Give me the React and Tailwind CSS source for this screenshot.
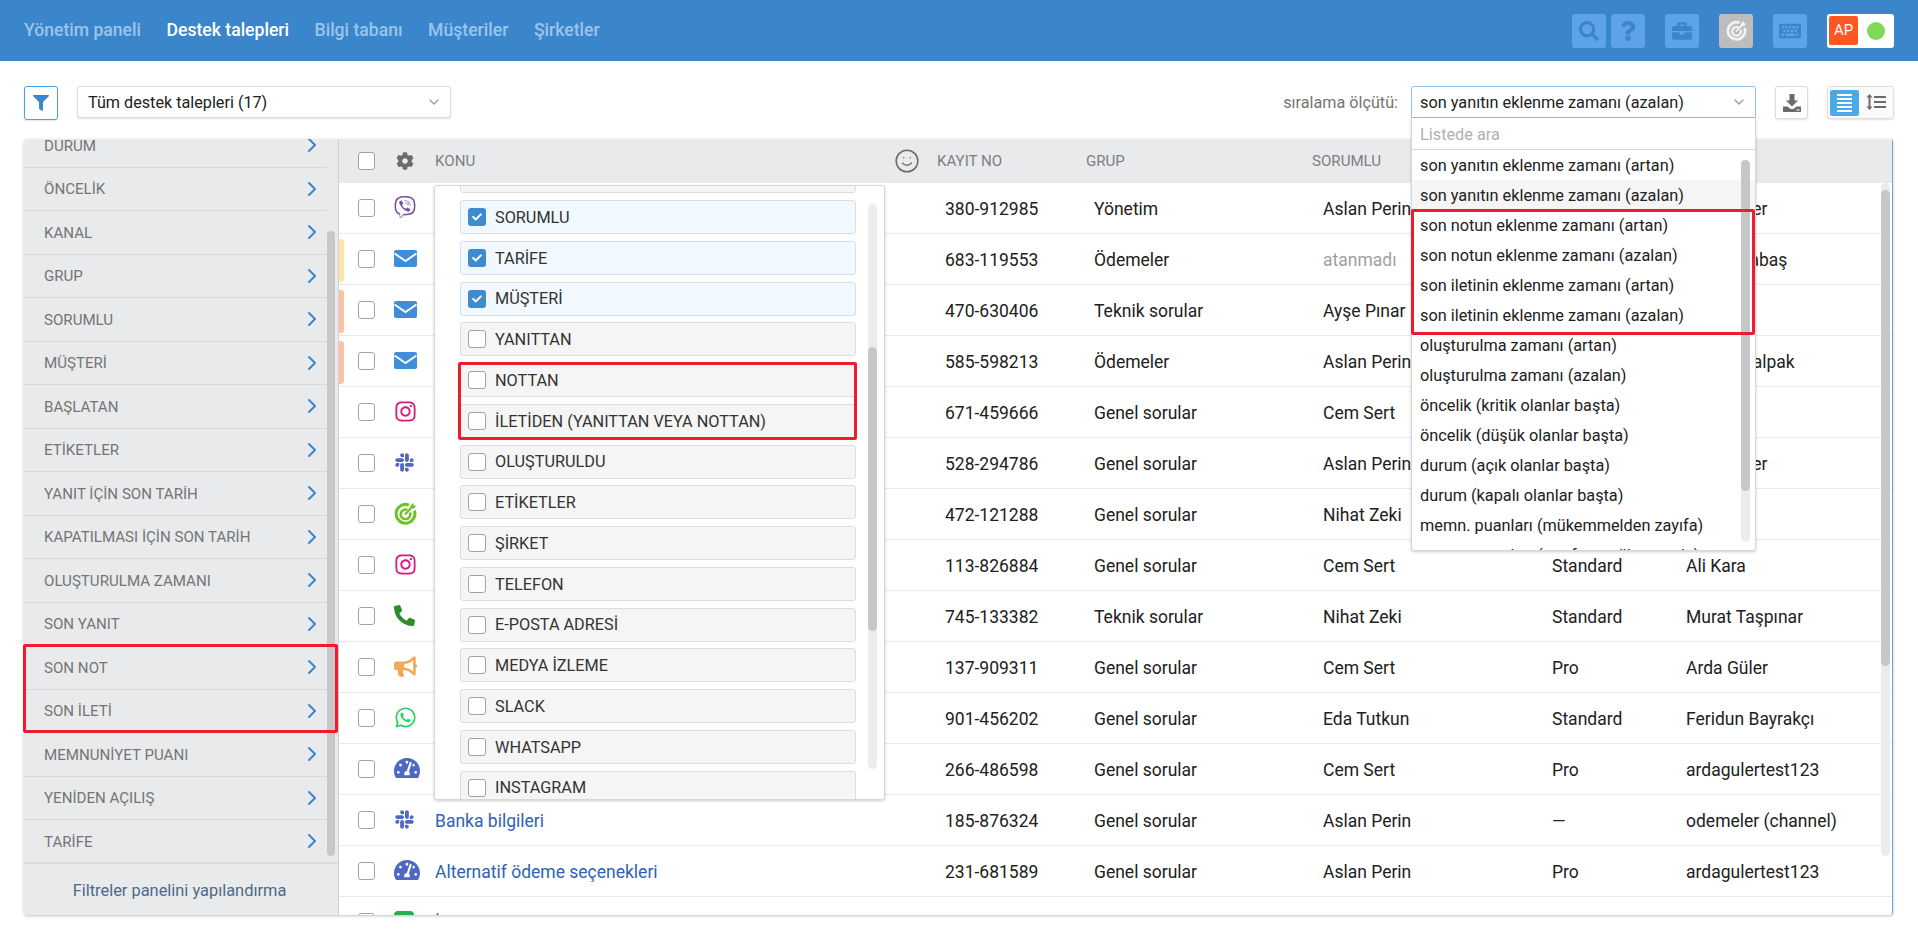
import React from "react";
import { FaViber, FaInstagram, FaSlack, FaWhatsapp, FaTachometerAlt, FaPhoneAlt, FaBullhorn, FaSearch, FaQuestion, FaBriefcase, FaKeyboard, FaCog, FaFilter, FaCheck } from "react-icons/fa";
import { ChevronRight, ChevronDown, Smile } from "lucide-react";

const filters = ["DURUM","ÖNCELİK","KANAL","GRUP","SORUMLU","MÜŞTERİ","BAŞLATAN","ETİKETLER","YANIT İÇİN SON TARİH","KAPATILMASI İÇİN SON TARİH","OLUŞTURULMA ZAMANI","SON YANIT","SON NOT","SON İLETİ","MEMNUNİYET PUANI","YENİDEN AÇILIŞ","TARİFE"];

const Mail = () => (
  <svg width="23" height="17" viewBox="0 0 23 17"><rect width="23" height="17" rx="2" fill="#3e8fd8"/><path d="M0.5 3.5 L11.5 11 L22.5 3.5" fill="none" stroke="#fff" strokeWidth="2"/></svg>
);
const Target = ({ c = "#6cc524", s = 23 }) => (
  <svg width={s} height={s} viewBox="0 0 24 24" fill="none">
    <path d="M15.5 3.2 A9.8 9.8 0 1 0 21.2 9" stroke={c} strokeWidth="3.2"/>
    <path d="M14 8.3 A5 5 0 1 0 16.6 11" stroke={c} strokeWidth="2.6"/>
    <path d="M11.5 13 L19 5" stroke={c} strokeWidth="2.2"/>
    <path d="M17 4 L20 1 L20.6 3.6 L23.4 4 L20.4 7 L17.4 6.6 Z" fill={c}/>
  </svg>
);
const icons = {
  viber: <FaViber size={22} color="#7b519d" />,
  mail: <Mail />,
  insta: <FaInstagram size={23} color="#d61a82" />,
  slack: <FaSlack size={21} color="#4f68c4" />,
  target: <Target />,
  phone: <FaPhoneAlt size={21} color="#2e8b2e" />,
  mega: <FaBullhorn size={23} color="#f0a85a" />,
  wa: <FaWhatsapp size={23} color="#25d366" />,
  gauge: <FaTachometerAlt size={26} color="#4f68c4" />,
  sms: <div className="w-[20px] h-[20px] rounded-[4px] bg-[#22b14c]" />,
};

const rows = [
  ["viber","Banka havalesi","380-912985","Yönetim","Aslan Perin","Pro","Cem Güler",""],
  ["mail","Fatura sorunu","683-119553","Ödemeler","atanmadı","Pro","Ayla Karabaş","y"],
  ["mail","Şifre sıfırlama","470-630406","Teknik sorular","Ayşe Pınar","Pro","—","p"],
  ["mail","Ödeme hatası","585-598213","Ödemeler","Aslan Perin","Pro","Ahmet Kalpak","p"],
  ["insta","Kargo durumu","671-459666","Genel sorular","Cem Sert","Pro","—",""],
  ["slack","Hesap bilgileri","528-294786","Genel sorular","Aslan Perin","Pro","Cem Güler",""],
  ["target","Ürün iadesi","472-121288","Genel sorular","Nihat Zeki","Pro","Eren Koç",""],
  ["insta","Sipariş takibi","113-826884","Genel sorular","Cem Sert","Standard","Ali Kara",""],
  ["phone","Geri arama","745-133382","Teknik sorular","Nihat Zeki","Standard","Murat Taşpınar",""],
  ["mega","Reklam yorumu","137-909311","Genel sorular","Cem Sert","Pro","Arda Güler",""],
  ["wa","Tarife seçimi","901-456202","Genel sorular","Eda Tutkun","Standard","Feridun Bayrakçı",""],
  ["gauge","Üyelik bilgisi","266-486598","Genel sorular","Cem Sert","Pro","ardagulertest123",""],
  ["slack","Banka bilgileri","185-876324","Genel sorular","Aslan Perin","—","odemeler (channel)",""],
  ["gauge","Alternatif ödeme seçenekleri","231-681589","Genel sorular","Aslan Perin","Pro","ardagulertest123",""],
  ["sms","İade talebi","402-118830","Genel sorular","Cem Sert","Pro","Ali Kara",""],
];

const columns = [
  ["SORUMLU",true],["TARİFE",true],["MÜŞTERİ",true],["YANITTAN",false],["NOTTAN",false],["İLETİDEN (YANITTAN VEYA NOTTAN)",false],["OLUŞTURULDU",false],["ETİKETLER",false],["ŞİRKET",false],["TELEFON",false],["E-POSTA ADRESİ",false],["MEDYA İZLEME",false],["SLACK",false],["WHATSAPP",false],["INSTAGRAM",false],
];

const sorts = ["son yanıtın eklenme zamanı (artan)","son yanıtın eklenme zamanı (azalan)","son notun eklenme zamanı (artan)","son notun eklenme zamanı (azalan)","son iletinin eklenme zamanı (artan)","son iletinin eklenme zamanı (azalan)","oluşturulma zamanı (artan)","oluşturulma zamanı (azalan)","öncelik (kritik olanlar başta)","öncelik (düşük olanlar başta)","durum (açık olanlar başta)","durum (kapalı olanlar başta)","memn. puanları (mükemmelden zayıfa)","memn. puanları (zayıftan mükemmele)"];

const Check = ({ on, cls = "" }) => on ? (
  <span className={"shrink-0 flex items-center justify-center w-[18px] h-[18px] rounded-[3px] bg-[#3f8bcf] " + cls}><FaCheck size={10} color="#fff" /></span>
) : (
  <span className={"shrink-0 block w-[18px] h-[18px] rounded-[3px] bg-white border-[1.5px] border-[#a3a3a3] " + cls} />
);

const HBtn = ({ children, grey }) => (
  <div className={"w-[34px] h-[34px] rounded-[3px] flex items-center justify-center " + (grey ? "bg-[#bdbdbd]" : "bg-[#5da3e8]")}>{children}</div>
);

const NavItem = ({ children, on }) => (
  <span className={"text-[17.6px] font-medium " + (on ? "text-white" : "text-[#9ac4ec]")}>{children}</span>
);

export default function App() {
  return (
    <div className="relative w-[1918px] h-[941px] overflow-hidden bg-white font-[Roboto,sans-serif] text-[#212121]">
      {/* top bar */}
      <header className="h-[61px] bg-[#3b86cb] flex items-center pl-[24px] pr-[24px]">
        <nav className="flex gap-[25.5px]">
          <NavItem>Yönetim paneli</NavItem>
          <NavItem on>Destek talepleri</NavItem>
          <NavItem>Bilgi tabanı</NavItem>
          <NavItem>Müşteriler</NavItem>
          <NavItem>Şirketler</NavItem>
        </nav>
        <div className="ml-auto flex items-center">
          <div className="flex gap-[5px]">
            <HBtn><FaSearch size={20} color="#3b86cb" /></HBtn>
            <HBtn><FaQuestion size={20} color="#3b86cb" /></HBtn>
          </div>
          <div className="ml-[20px]"><HBtn><FaBriefcase size={20} color="#3b86cb" /></HBtn></div>
          <div className="ml-[20px]"><HBtn grey><Target c="#f2f2f2" s={21} /></HBtn></div>
          <div className="ml-[20px]"><HBtn><FaKeyboard size={22} color="#3b86cb" /></HBtn></div>
          <div className="ml-[20px] w-[67px] h-[34px] rounded-[3px] bg-white flex items-center pl-[2px]">
            <span className="w-[29px] h-[29px] rounded-[2px] bg-[#ff5722] text-white text-[15px] flex items-center justify-center">AP</span>
            <span className="ml-[9px] w-[18px] h-[18px] rounded-full bg-[#7ed957]" />
          </div>
        </div>
      </header>

      {/* toolbar */}
      <div className="h-[78px] flex items-start pt-[25px] pl-[24px] pr-[24px]">
        <button className="w-[34px] h-[34px] rounded-[3px] border border-[#4aa0e6] bg-white flex items-center justify-center shadow-[0_1px_2px_rgba(0,0,0,0.12)]">
          <FaFilter size={16} color="#3b86cb" />
        </button>
        <div className="ml-[19px] w-[374px] h-[32px] rounded-[3px] border border-[#dcdcdc] bg-white shadow-[0_1px_2px_rgba(0,0,0,0.12)] flex items-center pl-[10px] pr-[8px] text-[16.2px]">
          <span className="pt-[2px]">Tüm destek talepleri (17)</span>
          <ChevronDown size={16} color="#9e9e9e" className="ml-auto" />
        </div>
        <span className="ml-auto text-[16.2px] text-[#757575] h-[32px] pt-[2px] flex items-center">sıralama ölçütü:</span>
        <div className="ml-[13px] w-[345px] h-[32px] rounded-t-[3px] border border-[#90c2ec] bg-white flex items-center pl-[8px] pr-[8px] text-[16.3px]">
          <span className="pt-[2px]">son yanıtın eklenme zamanı (azalan)</span>
          <ChevronDown size={16} color="#9e9e9e" className="ml-auto" />
        </div>
        <button className="ml-[19px] w-[33px] h-[33px] rounded-[3px] border border-[#dcdcdc] bg-white shadow-[0_1px_2px_rgba(0,0,0,0.12)] flex items-center justify-center">
          <svg width="18" height="18" viewBox="0 0 18 18" fill="#6b6b6b"><path d="M6.5 0h5v6.5h3.5L9 12.5 3 6.5h3.5z"/><path d="M0 12.5h4.5L7.5 15h3l3-2.5H18V18H0z"/><rect x="13.5" y="15.5" width="3" height="1" fill="#fff"/></svg>
        </button>
        <div className="ml-[19px] w-[67px] h-[33px] rounded-[3px] border border-[#e0e0e0] bg-[#fafafa] shadow-[0_1px_2px_rgba(0,0,0,0.12)] flex items-center pl-[2px]">
          <span className="w-[29px] h-[26px] rounded-[2px] bg-[#4aa9e9] flex flex-col items-center justify-center gap-[2px]">
            <i className="block w-[15px] h-[2px] bg-white"/><i className="block w-[15px] h-[2px] bg-white"/><i className="block w-[15px] h-[2px] bg-white"/><i className="block w-[15px] h-[2px] bg-white"/><i className="block w-[15px] h-[2px] bg-white"/>
          </span>
          <svg className="ml-[7px] -mt-[1px]" width="20" height="16" viewBox="0 0 20 16" fill="#6b6b6b"><path d="M3.5 0l3 3.5H4.5v9h2l-3 3.5-3-3.5h2v-9h-2z"/><rect x="8" y="2" width="12" height="2"/><rect x="8" y="7" width="12" height="2"/><rect x="8" y="12" width="12" height="2"/></svg>
        </div>
      </div>

      {/* main panel */}
      <div className="ml-[24px] w-[1869px] h-[776px] flex rounded-[3px] overflow-hidden border-r border-r-[#6ba6dc] shadow-[0_1px_3px_rgba(0,0,0,0.25)]">
        {/* filters */}
        <aside className="relative w-[315px] shrink-0 bg-[#e9eaec] border-r border-[#d0d2d4] flex flex-col">
          <div className="flex-1 overflow-hidden">
            <div className="-mt-[15px] pr-[11px]">
              {filters.map((f) => (
                <div key={f} className="h-[43.5px] flex items-center pl-[20px] pr-[3px] border-b border-[#d7d8da] text-[15.1px] text-[#757575]">
                  <span className="pt-[2px]">{f}</span>
                  <ChevronRight size={24} color="#3b86cb" strokeWidth={2} className="ml-auto" />
                </div>
              ))}
            </div>
          </div>
          <div className="h-[53px] shrink-0 border-t-2 border-[#dcdddf] pt-[3px] pr-[3px] flex items-center justify-center text-[16.4px] text-[#4c6a8a]">Filtreler panelini yapılandırma</div>
          <div className="absolute right-[3px] top-[92px] w-[8px] h-[625px] rounded-full bg-[#c5c7c9]" />
        </aside>

        {/* table */}
        <section className="relative flex-1 min-w-0">
          <div className="h-[44px] bg-[#e9eaec] flex items-center text-[15.1px] text-[#7d7f82]">
            <span className="pl-[19px] w-[57px]"><Check cls="!w-[17px]" /></span>
            <span className="w-[39px]"><FaCog size={18} color="#6b6b6b" /></span>
            <span className="w-[459px]">KONU</span>
            <span className="w-[43px]"><Smile size={26} color="#6b6b6b" strokeWidth={1.4} /></span>
            <span className="w-[149px]">KAYIT NO</span>
            <span className="w-[226px]">GRUP</span>
            <span>SORUMLU</span>
          </div>
          <div className="relative">
            {rows.map((r) => (
              <div key={r[2]} className="relative h-[51px] flex items-center border-b border-[#e8e9ea] text-[17.5px]">
                {r[7] && <span className={"absolute left-0 top-[5px] w-[5px] h-[43px] rounded-r-[3px] " + (r[7] === "y" ? "bg-[#ffe4a6]" : "bg-[#ffc0a8]")} />}
                <span className="pl-[19px] w-[55px] shrink-0"><Check cls="!w-[17px]" /></span>
                <span className="w-[41px] shrink-0 flex items-center -mt-[2px]">{icons[r[0]]}</span>
                <span className="w-[510px] shrink-0 pt-[2px] text-[#2f62b5]">{r[1]}</span>
                <span className="w-[149px] shrink-0 pt-[2px]">{r[2]}</span>
                <span className="w-[229px] shrink-0 pt-[2px]">{r[3]}</span>
                <span className={"w-[229px] shrink-0 pt-[2px] " + (r[4] === "atanmadı" ? "text-[#a0a0a0]" : "")}>{r[4]}</span>
                <span className="w-[134px] shrink-0 pt-[2px]">{r[5]}</span>
                <span className="pt-[2px]">{r[6]}</span>
              </div>
            ))}
            <div className="absolute right-[2px] top-[0px] w-[9px] h-[673px] rounded-full bg-[#eaecee]">
              <div className="w-[9px] h-[476px] mt-[7px] rounded-full bg-[#c5c7c9]" />
            </div>
          </div>
        </section>
      </div>

      {/* columns popover */}
      <div className="absolute left-[434px] top-[185px] w-[451px] h-[615px] bg-white border border-[#d8d8d8] rounded-[3px] shadow-[0_1px_3px_rgba(0,0,0,0.2)] overflow-hidden">
        <div className="absolute left-[25px] top-[-27px] w-[396px] h-[34px] rounded-[3px] bg-[#f5f5f5] border border-[#dcdcdc]" />
        <div className="pl-[25px] pt-[14px] flex flex-col gap-[6.75px]">
          {columns.map(([t, on]) => (
            <div key={t} className={"w-[396px] h-[34px] shrink-0 rounded-[3px] border flex items-center pl-[7px] text-[16.25px] text-[#333] " + (on ? "bg-[#f1f8fe] border-[#d5dfe8]" : "bg-[#f5f5f5] border-[#dcdcdc]")}>
              <Check on={on} />
              <span className="ml-[9px] pt-[2px]">{t}</span>
            </div>
          ))}
        </div>
        <div className="absolute left-[433px] top-[18px] w-[9px] h-[565px] rounded-full bg-[#eaecee]">
          <div className="mt-[143px] w-[9px] h-[284px] rounded-full bg-[#c5c7c9]" />
        </div>
      </div>

      {/* sort dropdown */}
      <div className="absolute left-[1411px] top-[118px] w-[345px] h-[433px] bg-white border border-[#d8d8d8] border-t-0 rounded-b-[3px] shadow-[0_1px_3px_rgba(0,0,0,0.2)] overflow-hidden text-[16.3px]">
        <div className="h-[32px] border-b border-[#d8d8d8] pl-[8px] pt-[3px] flex items-center text-[#b0b0b0]">Listede ara</div>
        <div>
          {sorts.map((s, i) => (
            <div key={s} className={"h-[30px] pl-[8px] pt-[2px] flex items-center " + (i === 1 ? "bg-[#f5f5f5]" : "")}>{s}</div>
          ))}
        </div>
        <div className="absolute left-[329px] top-[42px] w-[9px] h-[382px] rounded-full bg-[#eaecee]">
          <div className="w-[9px] h-[331px] rounded-full bg-[#c5c7c9]" />
        </div>
      </div>

      {/* red highlights */}
      <div className="absolute left-[23px] top-[644px] w-[315px] h-[89px] border-[3px] border-[#ee1c2e] rounded-[2px]" />
      <div className="absolute left-[458px] top-[362px] w-[399px] h-[78px] border-[3px] border-[#ee1c2e] rounded-[2px]" />
      <div className="absolute left-[1411px] top-[209px] w-[344px] h-[126px] border-[3px] border-[#ee1c2e] rounded-[2px]" />
    </div>
  );
}
